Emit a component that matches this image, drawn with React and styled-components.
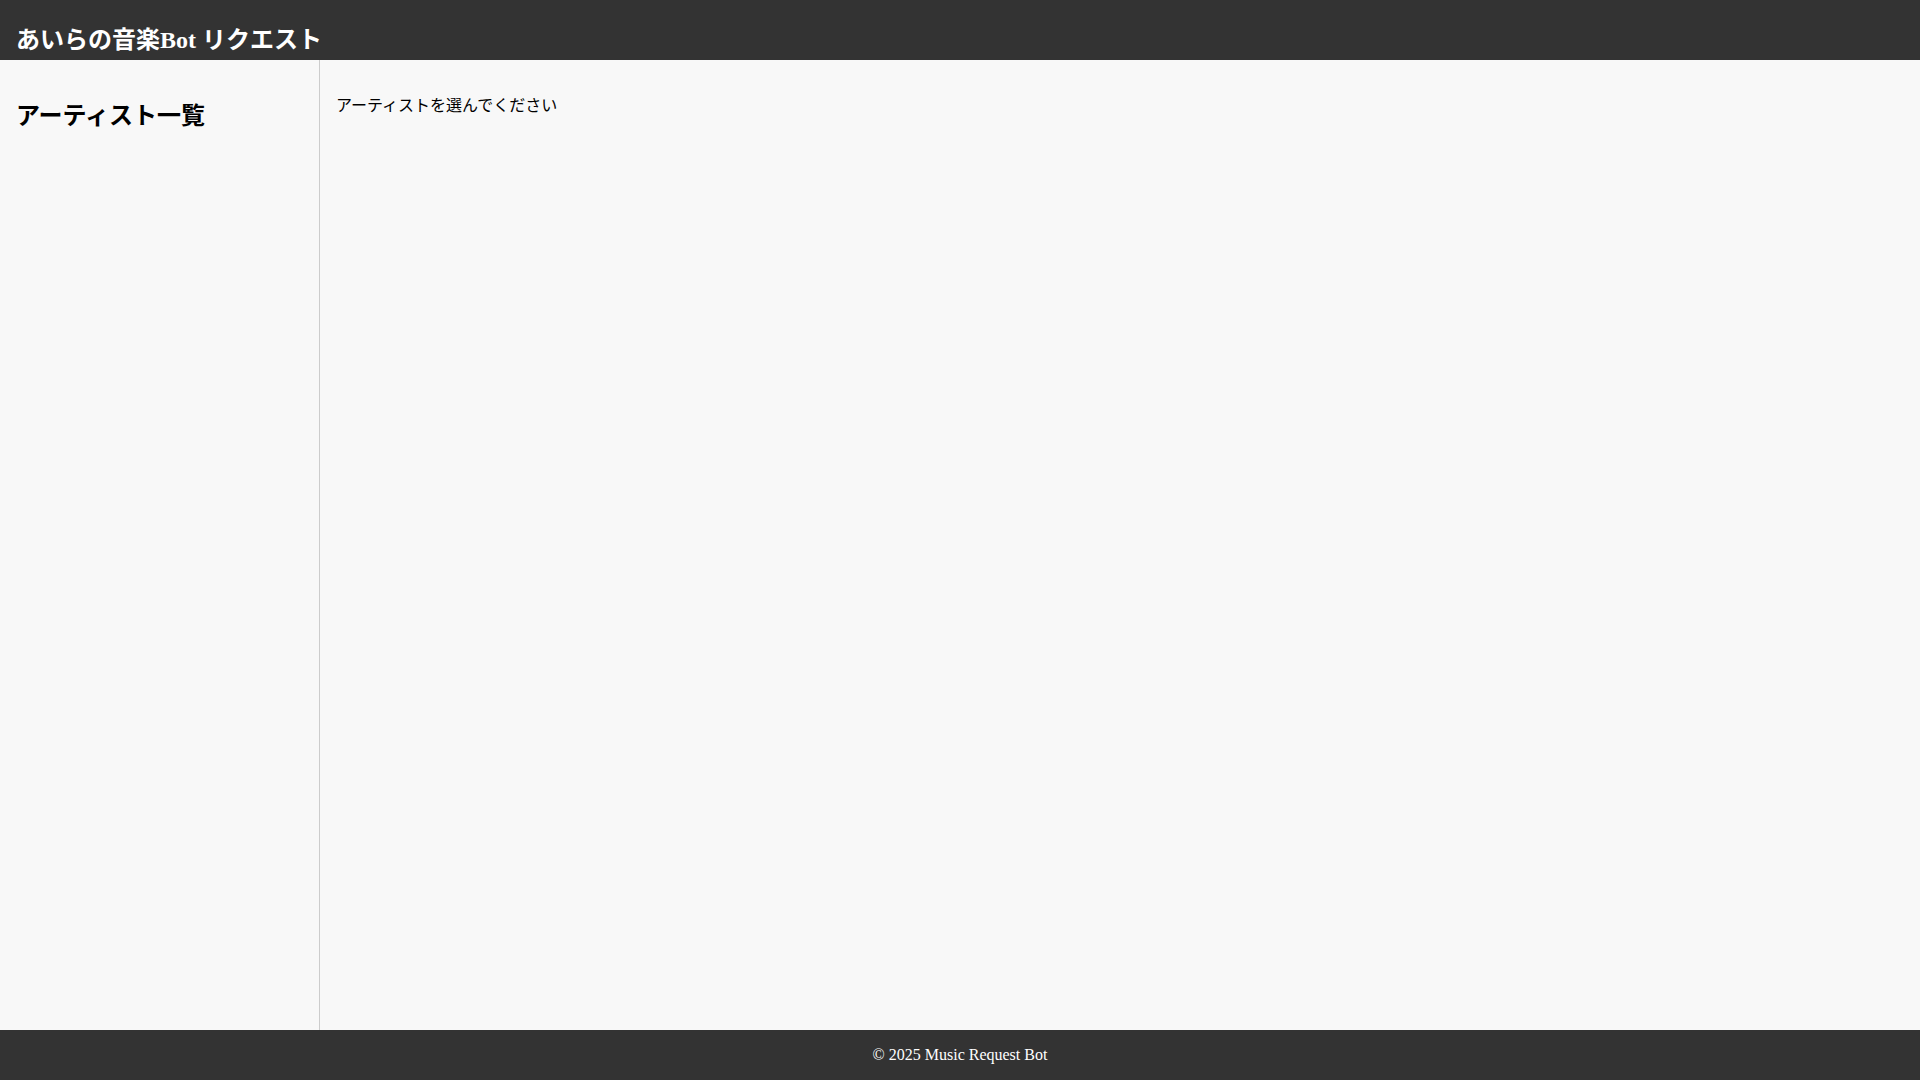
import React from "react";
import styled, { createGlobalStyle } from "styled-components";

const Global = createGlobalStyle`
  html, body { margin: 0; padding: 0; }
  body {
    font-family: "Liberation Serif", "Noto Sans CJK JP", serif;
    background: #f8f8f8;
    color: #000;
  }
  * { box-sizing: border-box; }
`;

const Page = styled.div`
  display: flex;
  flex-direction: column;
  height: 100vh;
`;

const Header = styled.header`
  height: 60px;
  flex: 0 0 60px;
  background: #333333;
  color: #ffffff;
  display: flex;
  align-items: flex-start;
  padding: 19px 16px 0;
`;

const Title = styled.h1`
  margin: 0;
  font-size: 24px;
  line-height: 42px;
  font-weight: bold;
`;

const Body = styled.div`
  flex: 1;
  display: flex;
  min-height: 0;
`;

const Sidebar = styled.aside`
  width: 320px;
  flex: 0 0 320px;
  border-right: 1px solid #cccccc;
  padding: 16px;
  background: #f8f8f8;
`;

const SideHeading = styled.h2`
  margin: 22px 0 19px;
  font-size: 24px;
  line-height: 36px;
  font-weight: bold;
`;

const Main = styled.main`
  flex: 1;
  padding: 16px;
  background: #f8f8f8;
`;

const Placeholder = styled.p`
  margin: 17px 0 16px;
  font-size: 16px;
  line-height: 23px;
  font-family: "Noto Sans CJK JP", sans-serif;
`;

const Footer = styled.footer`
  height: 50px;
  flex: 0 0 50px;
  background: #333333;
  color: #ffffff;
  display: flex;
  align-items: center;
  justify-content: center;
  font-size: 16px;
`;

export default function App() {
  return (
    <>
      <Global />
      <Page>
        <Header>
          <Title>あいらの音楽Bot リクエスト</Title>
        </Header>
        <Body>
          <Sidebar>
            <SideHeading>アーティスト一覧</SideHeading>
          </Sidebar>
          <Main>
            <Placeholder>アーティストを選んでください</Placeholder>
          </Main>
        </Body>
        <Footer>© 2025 Music Request Bot</Footer>
      </Page>
    </>
  );
}
